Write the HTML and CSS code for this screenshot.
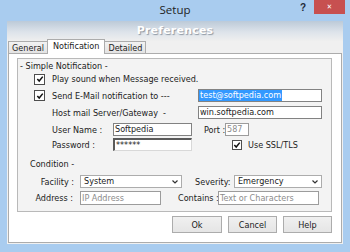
FILE: index.html
```html
<!DOCTYPE html>
<html lang="en">
<head>
  <meta charset="UTF-8" />
  <title>Setup</title>
  <link rel="stylesheet" href="styles.css">
</head>
<body>
  <div class="window">
    <div class="titlebar">
      <span></span>
      <span class="title">Setup</span>
      <div class="caption-btns">
        <span class="help-btn">?</span>
        <span class="close-btn">&#x2715;</span>
      </div>
    </div>

    <div class="client">
      <div class="banner">Preferences</div>

      <div class="tabs">
        <div class="tab">General</div>
        <div class="tab active">Notification</div>
        <div class="tab">Detailed</div>
      </div>

      <div class="panel">
        <div class="group">
          <div class="row legend">- Simple Notification -</div>

          <div class="row row-check row-1">
            <span class="check"><svg viewBox="0 0 9 9"><path d="M1.5 4.5 L3.6 6.8 L7.6 1.8"/></svg></span>
            <span class="check-label">Play sound when Message received.</span>
          </div>

          <div class="row row-check row-2">
            <span class="check"><svg viewBox="0 0 9 9"><path d="M1.5 4.5 L3.6 6.8 L7.6 1.8"/></svg></span>
            <span class="check-label w-host">Send E-Mail notification to ---</span>
            <span class="field w-mail"><span class="selected">test@softpedia.com</span></span>
          </div>

          <div class="row row-indent row-3">
            <span class="w-host">Host mail Server/Gateway&nbsp; -</span>
            <span class="field w-mail">win.softpedia.com</span>
          </div>

          <div class="row row-indent row-4">
            <span class="w-user">User Name :</span>
            <span class="field w-login">Softpedia</span>
            <span class="port-label">Port :</span>
            <span class="field disabled w-port">587</span>
          </div>

          <div class="row row-indent row-5">
            <span class="w-user">Password :</span>
            <span class="field sunken w-login">******</span>
            <span class="check small ssl"><svg viewBox="0 0 9 9"><path d="M1.5 4.5 L3.6 6.8 L7.6 1.8"/></svg></span>
            <span class="ssl-label">Use SSL/TLS</span>
          </div>

          <div class="row row-cond row-6">Condition -</div>

          <div class="row row-cond row-7">
            <span class="cond-label w-facility">Facility :</span>
            <span class="combo w-system">System<svg viewBox="0 0 6 4"><path d="M0.5 0.5 L3 3 L5.5 0.5"/></svg></span>
            <span class="sev-label">Severity:</span>
            <span class="combo w-sev">Emergency<svg viewBox="0 0 6 4"><path d="M0.5 0.5 L3 3 L5.5 0.5"/></svg></span>
          </div>

          <div class="row row-cond row-8">
            <span class="cond-label w-address">Address :</span>
            <span class="field hint w-ip">IP Address</span>
            <span class="contains-label">Contains :</span>
            <span class="field hint w-text">Text or Characters</span>
          </div>
        </div>

        <div class="buttons">
          <button class="btn btn-ok">Ok</button>
          <button class="btn">Cancel</button>
          <button class="btn">Help</button>
        </div>
      </div>
    </div>
  </div>
</body>
</html>
```

FILE: styles.css
```css
/* Window frame */
body {
  margin: 0;
  padding: 0;
  background: #a9ccef;
  font-family: "DejaVu Sans Condensed", "DejaVu Sans", sans-serif;
  font-stretch: condensed;
  font-size: 9px;
  color: #1b1b1b;
}

.window {
  width: 350px;
  height: 252px;
  background: #a9ccef;
}

/* Title bar */
.titlebar {
  height: 21px;
  display: grid;
  grid-template-columns: 1fr auto 1fr;
  align-items: start;
}

.title {
  font-family: "Open Sans", sans-serif;
  font-stretch: normal;
  font-size: 11.5px;
  line-height: 20px;
  color: #1e1e1e;
}

.caption-btns {
  display: flex;
  justify-content: flex-end;
  padding-right: 5px;
}

.help-btn {
  font-family: "Liberation Sans", sans-serif;
  font-weight: bold;
  font-size: 10px;
  line-height: 15px;
  color: #1e2a38;
  margin-right: 8px;
}

.close-btn {
  width: 31px;
  height: 14px;
  background: #c75050;
  color: #fff;
  font-family: "DejaVu Sans", sans-serif;
  font-size: 7px;
  font-weight: bold;
  line-height: 14px;
  text-align: center;
}

/* Client area */
.client {
  margin: 0 7px 0 7px;
  height: 223px;
  background: #f0f0f0;
  display: flex;
  flex-direction: column;
}

.banner {
  height: 20px;
  background: linear-gradient(180deg, #bccad8 0%, #dde3ea 55%, #efefef 100%);
  text-align: center;
  font-family: "DejaVu Sans", sans-serif;
  font-stretch: normal;
  font-weight: bold;
  font-size: 11px;
  line-height: 20px;
  color: #fff;
  letter-spacing: 0.2px;
  text-shadow: 1px 1px 1px #8d97a3;
}

/* Tabs */
.tabs {
  display: flex;
  align-items: flex-end;
  height: 12px;
  padding-left: 1px;
  position: relative;
  z-index: 1;
}

.tab {
  height: 12px;
  box-sizing: border-box;
  border: 1px solid #acacac;
  border-bottom: none;
  background: linear-gradient(180deg, #f2f2f2, #e3e3e3);
  padding: 0 3px;
  line-height: 12px;
  font-size: 9px;
  color: #222;
}

.tab + .tab {
  margin-left: -1px;
}

.tab.active {
  height: 15px;
  margin-bottom: -1px;
  background: #fff;
  padding: 0 5px;
  line-height: 13px;
}

/* Tab page */
.panel {
  margin-left: 1px;
  width: 334px;
  height: 190px;
  box-sizing: border-box;
  border: 1px solid #acacac;
  background: #fff;
}

.group {
  margin: 4px 0 0 8px;
  width: 315px;
  height: 154px;
  box-sizing: border-box;
  border: 1px solid #b9b9b9;
  background: #f3f3f3;
}

.row {
  display: flex;
  align-items: center;
  height: 13px;
  white-space: nowrap;
}

.legend { margin-top: 1px; padding-left: 2px; height: 12px; }
.row-check { padding-left: 16px; }
.row-indent { padding-left: 34px; }
.row-cond { padding-left: 12px; }

.row-1 { margin-top: 1px; height: 12px; }
.row-2 { margin-top: 4px; }
.row-3 { margin-top: 4px; }
.row-4 { margin-top: 4px; }
.row-5 { margin-top: 2px; }
.row-6 { margin-top: 7px; height: 12px; }
.row-7 { margin-top: 5px; }
.row-8 { margin-top: 3px; }

/* Check boxes */
.check {
  width: 11px;
  height: 11px;
  flex-shrink: 0;
  box-sizing: border-box;
  border: 1px solid #4d4d4d;
  background: #fff;
  display: inline-flex;
  align-items: center;
  justify-content: center;
}

.check svg {
  width: 8px;
  height: 8px;
  fill: none;
  stroke: #111;
  stroke-width: 1.7;
}

.check.small {
  width: 10px;
  height: 10px;
}

.check-label { margin-left: 7px; }

.ssl { margin-left: 40px; }
.ssl-label { margin-left: 6px; }

/* Text fields */
.field {
  height: 13px;
  flex-shrink: 0;
  box-sizing: border-box;
  border: 1px solid #828282;
  background: #fff;
  padding-left: 1px;
  line-height: 11px;
  overflow: hidden;
}

.field.sunken {
  border-color: #5a5a5a #d8d8d8 #d8d8d8 #5a5a5a;
  border-width: 2px 1px 1px 2px;
  line-height: 10px;
}

.field.disabled,
.field.hint {
  color: #8c8c8c;
  border-color: #9c9c9c;
}

.field.hint { height: 14px; line-height: 12px; }

.selected {
  display: inline-block;
  background: #3399ff;
  color: #fff;
  margin-left: -1px;
  padding: 0 1px;
}

.combo {
  height: 13px;
  flex-shrink: 0;
  box-sizing: border-box;
  border: 1px solid #acacac;
  background: #fff;
  padding-left: 3px;
  line-height: 11px;
  display: flex;
  align-items: center;
  justify-content: space-between;
}

.combo svg {
  width: 6px;
  height: 4px;
  margin-right: 3px;
  fill: none;
  stroke: #333;
  stroke-width: 1.2;
}

/* Column widths */
.w-host { width: 146px; flex-shrink: 0; }
.w-mail { width: 124px; }
.w-user { width: 61px; flex-shrink: 0; }
.w-login { width: 79px; }
.port-label { margin-left: 12px; width: 21px; }
.w-port { width: 24px; }

.cond-label { text-align: right; flex-shrink: 0; }
.w-facility { width: 44px; margin-right: 6px; }
.w-address { width: 43px; margin-right: 7px; }
.w-system { width: 102px; }
.sev-label { margin-left: 13px; width: 39px; }
.w-sev { width: 88px; }
.w-ip { width: 81px; }
.contains-label { margin-left: 17px; width: 40px; }
.w-text { width: 101px; }

/* Dialog buttons */
.buttons {
  display: flex;
  justify-content: flex-end;
  gap: 6px;
  margin-top: 4px;
  padding-right: 9px;
}

.btn {
  width: 49px;
  height: 17px;
  padding: 0;
  border: 1px solid #acacac;
  background: linear-gradient(180deg, #f0f0f0, #e5e5e5);
  font-family: inherit;
  font-stretch: condensed;
  font-size: 9px;
  color: #1b1b1b;
}

.btn-ok { width: 50px; }
```
